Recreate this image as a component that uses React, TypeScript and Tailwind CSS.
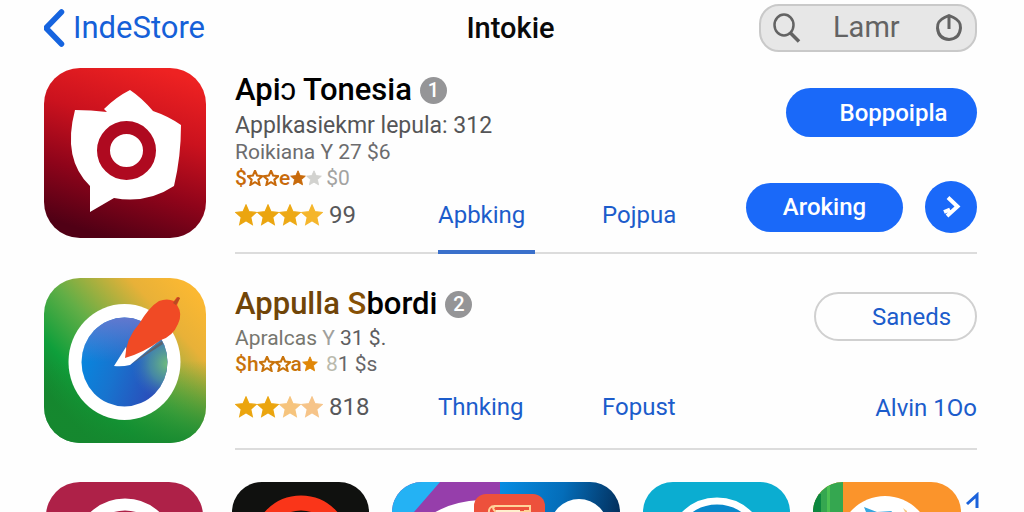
import { useState } from "react";

type StarProps = {
  className?: string;
  hollow?: boolean;
};

const STAR_PATH =
  "M12 1.2l3.2 7.2 7.8.8-5.9 5.2 1.7 7.8L12 18.2l-6.8 4 1.7-7.8L1 9.2l7.8-.8z";

function Star({ className, hollow }: StarProps) {
  return (
    <svg viewBox="0 0 24 24" className={className} aria-hidden="true">
      <path
        d={STAR_PATH}
        fill={hollow ? "none" : "currentColor"}
        stroke="currentColor"
        strokeWidth={hollow ? 3.2 : 1.4}
      />
    </svg>
  );
}

function Rating({ colors, count }: { colors: string[]; count: string }) {
  return (
    <div className="flex w-[203px] items-center">
      {colors.map((color, index) => (
        <Star key={index} className={`h-[22px] w-[22px] ${color}`} />
      ))}
      <span className="ml-1.5 text-2xl text-[#58585a]">{count}</span>
    </div>
  );
}

function Badge({ label }: { label: string }) {
  return (
    <span className="flex h-[27px] w-[27px] items-center justify-center rounded-full bg-[#959597] text-xl font-medium text-white">
      {label}
    </span>
  );
}

function ToneIcon() {
  return (
    <svg viewBox="0 0 162 170" className="h-[170px] w-[162px] shrink-0" aria-hidden="true">
      <defs>
        <linearGradient id="tone" x1="0.7" y1="0" x2="0.4" y2="1">
          <stop offset="0" stopColor="#ee2222" />
          <stop offset="0.35" stopColor="#cb121e" />
          <stop offset="0.68" stopColor="#8f041a" />
          <stop offset="1" stopColor="#500015" />
        </linearGradient>
      </defs>
      <rect width="162" height="170" rx="36" fill="url(#tone)" />
      <path
        d="M31 42Q47 42 63 44L60 41Q72 29 86 22Q98 30 109 43Q124 48 137 57Q137 89 130 118Q103 136 70 130L46 144V118Q18 91 31 42Z"
        fill="#fff"
      />
      <circle cx="82.500" cy="82.500" r="23" fill="#fff" stroke="#af0a20" strokeWidth="13" />
    </svg>
  );
}

function CompassIcon() {
  return (
    <svg viewBox="0 0 162 165" className="h-[165px] w-[162px] shrink-0" aria-hidden="true">
      <defs>
        <linearGradient id="field" x1="0.95" y1="0.1" x2="0.15" y2="0.85">
          <stop offset="0" stopColor="#fbb832" />
          <stop offset="0.22" stopColor="#e8b138" />
          <stop offset="0.55" stopColor="#62ae46" />
          <stop offset="0.8" stopColor="#0f9f3b" />
          <stop offset="1" stopColor="#15812e" />
        </linearGradient>
        <linearGradient id="shade" x1="0" y1="0" x2="0" y2="1">
          <stop offset="0.5" stopColor="#15952f" stopOpacity="0" />
          <stop offset="1" stopColor="#15882f" stopOpacity="0.9" />
        </linearGradient>
        <linearGradient id="dial" x1="0" y1="0.4" x2="0.9" y2="0.7">
          <stop offset="0" stopColor="#0787df" />
          <stop offset="0.45" stopColor="#1873ce" />
          <stop offset="1" stopColor="#2b4cb9" />
        </linearGradient>
        <linearGradient id="dialTop" x1="0" y1="0" x2="0" y2="1">
          <stop offset="0" stopColor="#6a78ce" stopOpacity="0.9" />
          <stop offset="0.5" stopColor="#6a78ce" stopOpacity="0" />
        </linearGradient>
        <radialGradient id="dialGlow" cx="1" cy="0.52" r="0.42">
          <stop offset="0" stopColor="#6fbd7c" />
          <stop offset="0.5" stopColor="#4c94a0" stopOpacity="0.8" />
          <stop offset="1" stopColor="#3670bd" stopOpacity="0" />
        </radialGradient>
      </defs>
      <rect width="162" height="165" rx="36" fill="url(#field)" />
      <rect width="162" height="165" rx="36" fill="url(#shade)" />
      <ellipse cx="80.500" cy="84" rx="56" ry="58" fill="#fff" />
      <ellipse cx="80.500" cy="84" rx="43" ry="44.500" fill="url(#dial)" />
      <ellipse cx="80.500" cy="84" rx="43" ry="44.500" fill="url(#dialTop)" />
      <ellipse cx="80.500" cy="84" rx="43" ry="44.500" fill="url(#dialGlow)" />
      <path d="M86 87L118 63 119 66 94 82Z" fill="#5b6470" />
      <path d="M70 88L82 69 84 78 116 62 86 87Q78 89 70 88Z" fill="#fff" />
      <path
        d="M81 80Q82 60 95 46Q105 29 115 23Q123 20 130 23L133 19 136 20 133 27Q139 36 134 46Q129 58 117 62Q99 75 81 80Z"
        fill="#f04a25"
      />
      <path d="M134 19L136 20 132 27 129 25Z" fill="#b84b22" />
    </svg>
  );
}

function MoreApps() {
  return (
    <div className="flex gap-[23px] pt-8">
      <svg viewBox="0 0 157 160" className="ml-0.5 mr-1.5 h-40 w-[157px] shrink-0" aria-hidden="true">
        <rect width="157" height="160" rx="34" fill="#ae2148" />
        <circle cx="79" cy="67" r="44.500" fill="none" stroke="#fff" strokeWidth="12" />
      </svg>
      <svg viewBox="0 0 137 160" className="h-40 w-[137px] shrink-0" aria-hidden="true">
        <rect width="137" height="160" rx="30" fill="#10110f" />
        <circle cx="69" cy="62" r="41" fill="none" stroke="#fa3519" strokeWidth="15" />
      </svg>
      <svg viewBox="0 0 228 160" className="h-40 w-[228px] shrink-0" aria-hidden="true">
        <defs>
          <clipPath id="pair">
            <rect width="228" height="160" rx="30" />
          </clipPath>
          <linearGradient id="sea" x1="0" y1="0" x2="1" y2="0.3">
            <stop offset="0" stopColor="#078de2" />
            <stop offset="0.5" stopColor="#046db9" />
            <stop offset="1" stopColor="#032b56" />
          </linearGradient>
        </defs>
        <g clipPath="url(#pair)">
          <rect width="120" height="160" fill="#963eab" />
          <path d="M0 0H48L22 30 0 60Z" fill="#24b2f4" />
          <rect x="108" width="120" height="160" fill="url(#sea)" />
          <path d="M40 32Q61 19 88 18V160H40Z" fill="#fff" />
          <circle cx="187" cy="46" r="29" fill="#fff" />
          <rect x="82" y="12" width="71" height="80" rx="12" fill="#ed513c" />
          <path d="M97 32Q96 24 103 24H138V29H133V40M103 24Q99 26 104 30H133" fill="none" stroke="#ffd49a" strokeWidth="2" />
          <path d="M104 28H128V40H104Z" fill="#fff0cd" />
        </g>
      </svg>
      <svg viewBox="0 0 147 160" className="h-40 w-[147px] shrink-0" aria-hidden="true">
        <rect width="147" height="160" rx="30" fill="#0badd1" />
        <circle cx="74" cy="65" r="46" fill="#0889cb" stroke="#fff" strokeWidth="7" />
      </svg>
      <div className="flex gap-1">
        <svg viewBox="0 0 148 160" className="h-40 w-[148px] shrink-0" aria-hidden="true">
          <defs>
            <clipPath id="leaf">
              <rect width="148" height="160" rx="30" />
            </clipPath>
          </defs>
          <g clipPath="url(#leaf)">
            <rect width="148" height="160" fill="#fb942b" />
            <rect width="30" height="160" fill="#35a750" />
            <path d="M0 12H8V160H0Z" fill="#0c873f" />
            <path d="M14 0H17V160H14Z" fill="#4bc052" />
            <circle cx="72" cy="60" r="46" fill="#fff" />
            <path d="M51 25L64 30 79 29 72 40H57Z" fill="#37a6df" />
            <path d="M90 26L94 29V34Z" fill="#f5c988" />
          </g>
        </svg>
        <a href="#next" aria-label="Next" className="pt-2.5">
          <svg viewBox="0 0 14 18" className="h-[18px] w-3.5" aria-hidden="true">
            <path d="M2 12L12 3V16" fill="none" stroke="#1b62db" strokeWidth="3" />
          </svg>
        </a>
      </div>
    </div>
  );
}

export default function App() {
  const [search, setSearch] = useState("Lamr");

  return (
    <div className="h-screen overflow-hidden bg-[#fefefe] pl-11 pr-[47px] font-['Roboto','Liberation_Sans',sans-serif]">
      {/* Top bar */}
      <header className="grid grid-cols-[1fr_auto_1fr] items-center pb-4 pt-1">
        <a href="#store" className="flex items-center gap-2 text-[31px] leading-10 text-[#1560d8]">
          <svg viewBox="0 0 21 38" className="h-[38px] w-[21px]" aria-hidden="true">
            <path d="M17.500 3L2 19l15.500 16" fill="none" stroke="#1664df" strokeWidth="5.500" strokeLinecap="round" />
          </svg>
          IndeStore
        </a>
        <h1 className="text-[29px] font-medium leading-10 text-[#0a0a0a]">Intokie</h1>
        <div className="flex h-12 w-[218px] items-center gap-3 justify-self-end rounded-[20px] border-2 border-[#c9c9c9] bg-[#e7e7e7] px-3 text-[#636363]">
          <svg viewBox="0 0 28 30" className="h-[30px] w-7 shrink-0" aria-hidden="true">
            <ellipse cx="11" cy="12" rx="9.500" ry="10.500" fill="none" stroke="currentColor" strokeWidth="2.500" />
            <path d="M17.500 20L26 28.500" stroke="currentColor" strokeWidth="3.500" />
          </svg>
          <input
            type="text"
            aria-label="Search"
            className="min-w-0 flex-1 bg-transparent pl-5 text-[29px] outline-none"
            value={search}
            onChange={(e) => setSearch(e.target.value)}
          />
          <button aria-label="Clear search" onClick={() => setSearch("")}>
            <svg viewBox="0 0 28 30" className="h-[30px] w-7" aria-hidden="true">
              <path
                d="M14 2.500L18.500 4.500Q26 8 25.500 15Q24.500 26 14 26.500Q3.500 26 2.500 15Q2 8 9.500 4.500ZM14 2V16"
                fill="none"
                stroke="currentColor"
                strokeWidth="3"
                strokeLinejoin="round"
              />
            </svg>
          </button>
        </div>
      </header>

      {/* First app */}
      <article className="flex gap-[29px]">
        <ToneIcon />
        <div className="flex flex-1 justify-between border-b-2 border-[#dcdcdc]">
          <div>
            <h2 className="flex items-center gap-2 pt-1 text-[31px] font-medium leading-9 text-black">
              Apiɔ Tonesia
              <Badge label="1" />
            </h2>
            <p className="pt-1 text-[23px] leading-7 text-[#555557]">Applkasiekmr lepula: 312</p>
            <p className="text-[21px] leading-6 text-[#6c6c6e]">Roikiana Y 27 $6</p>
            <p className="flex items-center text-[21px] font-medium leading-7 text-[#c86a0b]">
              $
              <Star hollow className="h-4 w-4" />
              <Star hollow className="h-4 w-4" />
              e
              <Star className="h-4 w-4" />
              <Star className="h-4 w-4 text-[#d2d2cf]" />
              <span className="ml-1 font-normal text-[#a3a3a1]">$0</span>
            </p>
            <div className="flex h-[60px] text-2xl text-[#1c5ccb]">
              <div className="flex pb-3.5">
                <Rating
                  colors={["text-[#eba50f]", "text-[#eba50f]", "text-[#eda916]", "text-[#f5b62c]"]}
                  count="99"
                />
              </div>
              <a href="#apbking" className="-mb-0.5 mr-[67px] flex w-[97px] items-center border-b-4 border-[#3a70cb] pb-3">
                Apbking
              </a>
              <a href="#pojpua" className="flex items-center pb-3.5">
                Pojpua
              </a>
            </div>
          </div>
          <div className="flex flex-col items-end gap-11 pt-5 text-2xl font-medium text-white">
            <button className="h-[49px] w-[191px] rounded-full bg-[#1a69f9] pl-6">Boppoipla</button>
            <div className="flex items-center gap-[22px]">
              <button className="h-[49px] w-[157px] rounded-full bg-[#1a69f9]">Aroking</button>
              <button aria-label="Open" className="flex h-[52px] w-[52px] items-center justify-center rounded-full bg-[#1a69f9]">
                <svg viewBox="0 0 20 24" className="h-6 w-5" aria-hidden="true">
                  <path d="M7 2.500L16.500 11.500 6 21M3 17L9 14.500" fill="none" stroke="#fff" strokeWidth="4" />
                </svg>
              </button>
            </div>
          </div>
        </div>
      </article>

      {/* Second app */}
      <article className="mt-6 flex gap-[29px]">
        <CompassIcon />
        <div className="flex flex-1 justify-between border-b-2 border-[#dcdcdc]">
          <div>
            <h2 className="flex items-center gap-2 pt-2 text-[31px] font-medium leading-9 text-black">
              <span>
                <span className="text-[#704508]">Appulla </span>
                <span className="text-[#865005]">S</span>bordi
              </span>
              <Badge label="2" />
            </h2>
            <p className="pt-1 text-[21px] leading-6 text-[#77776f]">
              Apralcas <span className="text-[#a0a09c]">Y</span> <span className="text-[#5d5d5f]">31 $.</span>
            </p>
            <p className="flex items-center text-[21px] font-medium leading-7 text-[#c8730b]">
              $h
              <Star hollow className="h-4 w-4" />
              <Star hollow className="h-4 w-4" />
              a
              <Star className="h-4 w-4 text-[#e08607]" />
              <span className="ml-2 font-normal text-[#b9b9ac]">8</span>
              <span className="font-normal text-[#666668]">1 $s</span>
            </p>
            <div className="flex h-[70px] items-center pb-3 text-2xl text-[#1c5ccb]">
              <Rating
                colors={["text-[#eba50f]", "text-[#eba50f]", "text-[#f6c47d]", "text-[#f6c489]"]}
                count="818"
              />
              <a href="#thnking" className="mr-[67px] w-[97px]">
                Thnking
              </a>
              <a href="#fopust">Fopust</a>
            </div>
          </div>
          <div className="flex flex-col items-end justify-between pb-6 pt-3.5 text-2xl text-[#1c5ccb]">
            <button className="h-[49px] w-[163px] rounded-full border-2 border-[#d0d0d0] pl-8">Saneds</button>
            <a href="#alvin">Alvin 1Oo</a>
          </div>
        </div>
      </article>

      <MoreApps />
    </div>
  );
}
